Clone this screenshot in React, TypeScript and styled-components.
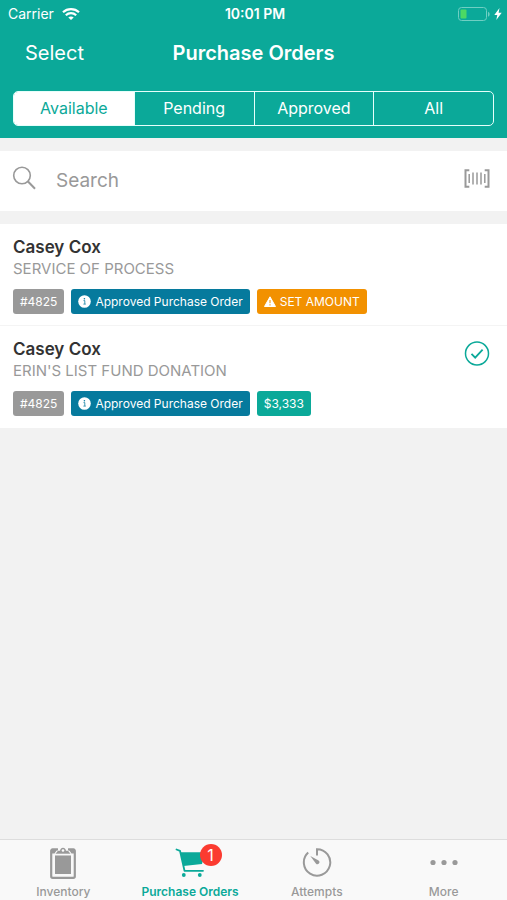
import React, { useState } from "react";
import styled, { createGlobalStyle } from "styled-components";

const teal = "#0ba999";
const grey = "#999999";

const GlobalStyle = createGlobalStyle`
  *, *::before, *::after { box-sizing: border-box; }
  body {
    margin: 0;
    background: #f2f2f2;
    color: #333333;
    font-family: Inter, "Liberation Sans", sans-serif;
  }
  button, input { font: inherit; }
  h1, h2, p, ul { margin: 0; padding: 0; }
`;

const Screen = styled.div`
  display: flex;
  flex-direction: column;
  min-height: 100vh;
`;

const Header = styled.header`
  background: ${teal};
  color: #ffffff;
  padding-bottom: 12px;
`;

const StatusBar = styled.div`
  display: grid;
  grid-template-columns: 1fr auto 1fr;
  align-items: center;
  height: 28px;
  padding: 0 5px 0 8px;
  font-size: 14px;
  line-height: 20px;
`;

const StatusGroup = styled.div<{ $end?: boolean }>`
  display: flex;
  align-items: center;
  gap: ${(p) => (p.$end ? 4 : 8)}px;
  justify-content: ${(p) => (p.$end ? "flex-end" : "flex-start")};
`;

const Clock = styled.time`
  font-weight: 600;
`;

const NavBar = styled.div`
  display: grid;
  grid-template-columns: 1fr auto 1fr;
  align-items: center;
  height: 49px;
  padding: 0 25px;
`;

const NavButton = styled.button`
  justify-self: start;
  border: 0;
  padding: 0;
  background: none;
  color: inherit;
  font-size: 20px;
  line-height: 24px;
  cursor: pointer;
`;

const Title = styled.h1`
  font-size: 20px;
  line-height: 24px;
  font-weight: 600;
`;

const Segments = styled.div`
  display: grid;
  grid-template-columns: repeat(4, 1fr);
  height: 35px;
  margin: 14px 13px 0;
  border: 1px solid #e6fffb;
  border-radius: 5px;
  overflow: hidden;
`;

const Segment = styled.button<{ $active: boolean }>`
  border: 0;
  padding: 0 0 1px;
  background: ${(p) => (p.$active ? "#ffffff" : "transparent")};
  color: ${(p) => (p.$active ? teal : "#ffffff")};
  font-size: 16px;
  line-height: 20px;
  cursor: pointer;
  & + & { border-left: 1px solid #e6fffb; }
`;

const SearchBar = styled.label`
  display: flex;
  align-items: center;
  height: 60px;
  margin: 13px 0;
  padding: 0 17px 0 12px;
  background: #ffffff;
`;

const SearchInput = styled.input`
  flex: 1;
  min-width: 0;
  margin: 0 20px;
  border: 0;
  padding: 0;
  outline: 0;
  background: transparent;
  font-size: 19px;
  line-height: 24px;
  &::placeholder { color: ${grey}; opacity: 1; }
`;

const ScanButton = styled.button`
  display: flex;
  border: 0;
  padding: 0 0 6px;
  background: none;
  cursor: pointer;
`;

const OrderList = styled.ul`
  list-style: none;
  background: #ffffff;
`;

const OrderRow = styled.li`
  display: flex;
  justify-content: space-between;
  min-height: 102px;
  padding: 13px 17px 11px 13px;
  &:not(:last-child) { border-bottom: 1px solid #f4f4f4; }
`;

const OrderName = styled.h2`
  font-size: 17px;
  line-height: 20px;
  font-weight: 600;
`;

const OrderType = styled.p`
  margin-top: 2px;
  color: ${grey};
  font-size: 15px;
  line-height: 20px;
  text-transform: uppercase;
`;

const Tags = styled.div`
  display: flex;
  gap: 7px;
  margin-top: 10px;
`;

const Tag = styled.span<{ $color: string }>`
  display: flex;
  align-items: center;
  gap: 4px;
  height: 25px;
  padding: 0 7px;
  border-radius: 3px;
  background: ${(p) => p.$color};
  color: #ffffff;
  font-size: 12px;
  line-height: 16px;
  white-space: nowrap;
`;

const TabBar = styled.nav`
  display: grid;
  grid-template-columns: repeat(4, 1fr);
  height: 61px;
  margin-top: auto;
  border-top: 1px solid #dddddd;
  background: #f9f9f9;
`;

const Tab = styled.a<{ $active?: boolean }>`
  display: flex;
  flex-direction: column;
  align-items: center;
  padding-top: 7px;
  color: ${(p) => (p.$active ? teal : grey)};
  font-size: 12px;
  line-height: 16px;
  font-weight: ${(p) => (p.$active ? 600 : 500)};
  text-decoration: none;
  white-space: nowrap;
`;

const TabIcon = styled.span`
  position: relative;
  display: flex;
  margin-bottom: 4px;
`;

const Badge = styled.span`
  position: absolute;
  top: -3px;
  left: 25px;
  width: 22px;
  height: 22px;
  border-radius: 50%;
  background: #fb3b30;
  color: #ffffff;
  font-size: 16px;
  line-height: 22px;
  font-weight: 400;
  text-align: center;
`;

const WifiIcon = () => (
  <svg width="18" height="13" viewBox="0 0 18 13" fill="none" stroke="#fff" strokeWidth="2.2" aria-hidden="true">
    <path d="M1 4.3C5.4.1 12.6.1 17 4.3" />
    <path d="M3.8 7.3c3-2.8 7.4-2.8 10.4 0" />
    <path d="M9 12.1 6.3 9.4c1.5-1.3 3.9-1.3 5.4 0z" fill="#fff" stroke="none" />
  </svg>
);

const BatteryIcon = () => (
  <svg width="32" height="15" viewBox="0 0 32 15" aria-hidden="true">
    <rect x=".5" y=".5" width="28" height="13" rx="3" fill="none" stroke="#6fcfc3" />
    <rect x="2.5" y="2.5" width="6" height="9" rx="1" fill="#4cd964" />
    <path d="M30 4.700c2.200.7 2.200 4.300 0 5z" fill="#6fcfc3" />
  </svg>
);

const BoltIcon = () => (
  <svg width="8" height="12" viewBox="0 0 8 12" fill="#fff" aria-hidden="true">
    <path d="M5.5 0 .3 6.9h3L2.3 12 7.7 4.8H4.6z" />
  </svg>
);

const SearchIcon = () => (
  <svg width="24" height="30" viewBox="0 0 24 30" fill="none" stroke={grey} strokeWidth="1.6" aria-hidden="true">
    <circle cx="10" cy="9.5" r="8.3" />
    <path d="m16 15.5 7 7.3" strokeWidth="2" />
  </svg>
);

const BarcodeIcon = () => (
  <svg width="26" height="19" viewBox="0 0 26 19" fill="none" stroke={grey} strokeWidth="1.5" aria-hidden="true">
    <path d="M5.3 1.3H1.500v16.400h3.800M20.700 1.300h3.800v16.400h-3.800" strokeWidth="2" />
    <path d="M5.2 5v9M9 3.500v12M13 3.500v12M17 3.500v12M20.800 5v9" />
  </svg>
);

const InfoIcon = () => (
  <svg width="13" height="13" viewBox="0 0 13 13" aria-hidden="true">
    <circle cx="6.5" cy="6.5" r="6.3" fill="#fff" />
    <path d="M5.500 5.600h1.300v3.300M5.400 9.100h2.400" stroke="#067a9d" strokeWidth=".8" fill="none" />
    <circle cx="6.4" cy="3.7" r=".8" fill="#067a9d" />
  </svg>
);

const WarningIcon = () => (
  <svg width="12" height="12" viewBox="0 0 12 12" aria-hidden="true">
    <path d="M6 .8 11.500 10.500H.5z" fill="#fff" stroke="#fff" strokeLinejoin="round" />
    <path d="M6 4v3.200M6 8.200v1.300" stroke="#f29100" />
  </svg>
);

const CheckIcon = () => (
  <svg width="26" height="28" viewBox="0 0 26 28" fill="none" stroke={teal} role="img" aria-label="Ready">
    <circle cx="13" cy="14.5" r="11.5" strokeWidth="1.5" />
    <path d="m7.500 14.900 3.700 3.800 7.400-8" strokeWidth="1.8" />
  </svg>
);

const ClipboardIcon = () => (
  <svg width="26" height="33" viewBox="0 0 26 33" fill="none" aria-hidden="true">
    <rect x="1.2" y="2.5" width="23.6" height="28.3" rx="1.5" stroke={grey} strokeWidth="2.2" />
    <rect x="5" y="8.3" width="16" height="18.7" fill={grey} />
    <path d="M1.500 1.500H8L4.500 6.500H1.500zM18 1.500h6.500v5H21.500z" fill={grey} />
    <path d="M8 1h10v3.500H8z" fill="#f9f9f9" />
    <path d="M5.500 6.800 8 3.800h2C10.500-.3 15.500-.3 16 3.800h2l2.500 3z" fill={grey} />
    <circle cx="13" cy="3.500" r="1.300" fill="#f9f9f9" />
    <path d="M5 7.600h16" stroke="#f9f9f9" strokeWidth="1.300" />
  </svg>
);

const CartIcon = () => (
  <svg width="31" height="33" viewBox="0 0 31 33" fill="none" aria-hidden="true">
    <path d="M1.500 2.500 5 3.800l4.500 20H28" stroke={teal} strokeWidth="1.8" strokeLinecap="round" strokeLinejoin="round" />
    <path d="M5.500 5.200H30L27 17 8.500 19z" fill={teal} />
    <circle cx="8.8" cy="28" r="1.9" fill={teal} />
    <circle cx="24.8" cy="28" r="1.9" fill={teal} />
  </svg>
);

const TimerIcon = () => (
  <svg width="30" height="33" viewBox="0 0 30 33" fill="none" stroke={grey} strokeWidth="2" aria-hidden="true">
    <path d="M15 8.500V2.200A13.200 13.200 0 1 1 6.200 5.600" />
    <path d="m8.300 8.900 8.300 4.600a2 2 0 1 1-2.700 2.900z" fill={grey} stroke="none" />
  </svg>
);

const MoreIcon = () => (
  <svg width="30" height="33" viewBox="0 0 30 33" fill={grey} aria-hidden="true">
    <circle cx="4" cy="15.5" r="2.6" />
    <circle cx="15" cy="15.5" r="2.6" />
    <circle cx="26" cy="15.5" r="2.6" />
  </svg>
);

const filters = ["Available", "Pending", "Approved", "All"];

const orders = [
  { name: "Casey Cox", type: "Service of Process", id: "#4825", amount: "" },
  { name: "Casey Cox", type: "Erin's List Fund Donation", id: "#4825", amount: "$3,333" },
];

export default function App() {
  const [filter, setFilter] = useState("Available");
  const [query, setQuery] = useState("");

  return (
    <Screen>
      <GlobalStyle />
      <Header>
        <StatusBar>
          <StatusGroup>
            Carrier <WifiIcon />
          </StatusGroup>
          <Clock>10:01 PM</Clock>
          <StatusGroup $end>
            <BatteryIcon />
            <BoltIcon />
          </StatusGroup>
        </StatusBar>
        <NavBar>
          <NavButton type="button">Select</NavButton>
          <Title>Purchase Orders</Title>
        </NavBar>
        <Segments role="group" aria-label="Filter">
          {filters.map((f) => (
            <Segment key={f} type="button" $active={f === filter} aria-pressed={f === filter} onClick={() => setFilter(f)}>
              {f}
            </Segment>
          ))}
        </Segments>
      </Header>

      <SearchBar>
        <SearchIcon />
        <SearchInput
          type="text"
          placeholder="Search"
          aria-label="Search"
          value={query}
          onChange={(e) => setQuery(e.target.value)}
        />
        <ScanButton type="button" aria-label="Scan barcode">
          <BarcodeIcon />
        </ScanButton>
      </SearchBar>

      <OrderList>
        {orders.map((o) => (
          <OrderRow key={o.type}>
            <div>
              <OrderName>{o.name}</OrderName>
              <OrderType>{o.type}</OrderType>
              <Tags>
                <Tag $color="#999999">{o.id}</Tag>
                <Tag $color="#067a9d">
                  <InfoIcon />
                  Approved Purchase Order
                </Tag>
                {o.amount ? (
                  <Tag $color={teal}>{o.amount}</Tag>
                ) : (
                  <Tag $color="#f29100">
                    <WarningIcon />
                    SET AMOUNT
                  </Tag>
                )}
              </Tags>
            </div>
            {o.amount && <CheckIcon />}
          </OrderRow>
        ))}
      </OrderList>

      <TabBar aria-label="Main">
        <Tab href="#inventory">
          <TabIcon><ClipboardIcon /></TabIcon>
          Inventory
        </Tab>
        <Tab href="#orders" $active aria-current="page">
          <TabIcon>
            <CartIcon />
            <Badge>1</Badge>
          </TabIcon>
          Purchase Orders
        </Tab>
        <Tab href="#attempts">
          <TabIcon><TimerIcon /></TabIcon>
          Attempts
        </Tab>
        <Tab href="#more">
          <TabIcon><MoreIcon /></TabIcon>
          More
        </Tab>
      </TabBar>
    </Screen>
  );
}
